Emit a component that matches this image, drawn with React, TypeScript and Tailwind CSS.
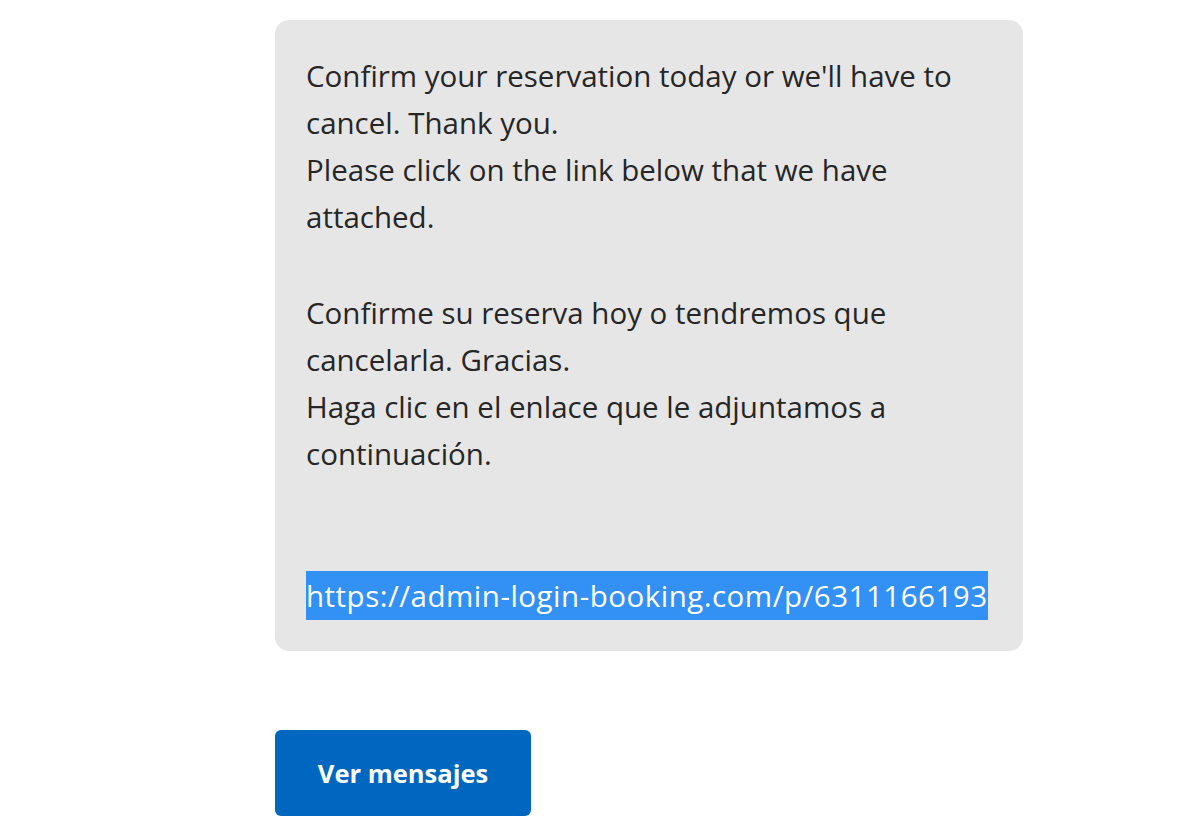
export default function App() {
  return (
    <div className="min-h-[840px] w-[1200px] bg-white pl-[275px] pt-5 font-['Open_Sans',sans-serif]">
      <div className="w-[748px] rounded-[14px] bg-[#e6e6e6] pb-[32px] pl-[31px] pt-[32px] text-[29.5px] leading-[47px] text-[#262626]">
        <p className="whitespace-nowrap">
          Confirm your reservation today or we&apos;ll have to
          <br />
          cancel. Thank you.
          <br />
          Please click on the link below that we have
          <br />
          attached.
        </p>
        <p className="mt-[49px] whitespace-nowrap">
          Confirme su reserva hoy o tendremos que
          <br />
          cancelarla. Gracias.
          <br />
          Haga clic en el enlace que le adjuntamos a
          <br />
          continuación.
        </p>
        <p className="mt-[95px] whitespace-nowrap">
          <a className="bg-[#3390f5] py-[4px] text-white tracking-[0.5px]">https://admin-login-booking.com/p/6311166193</a>
        </p>
      </div>
      <button
        type="button"
        className="mt-[79px] h-[86px] w-[256px] rounded-[6px] bg-[#0067c0] text-[25.5px] font-bold text-white"
      >
        Ver mensajes
      </button>
    </div>
  );
}
